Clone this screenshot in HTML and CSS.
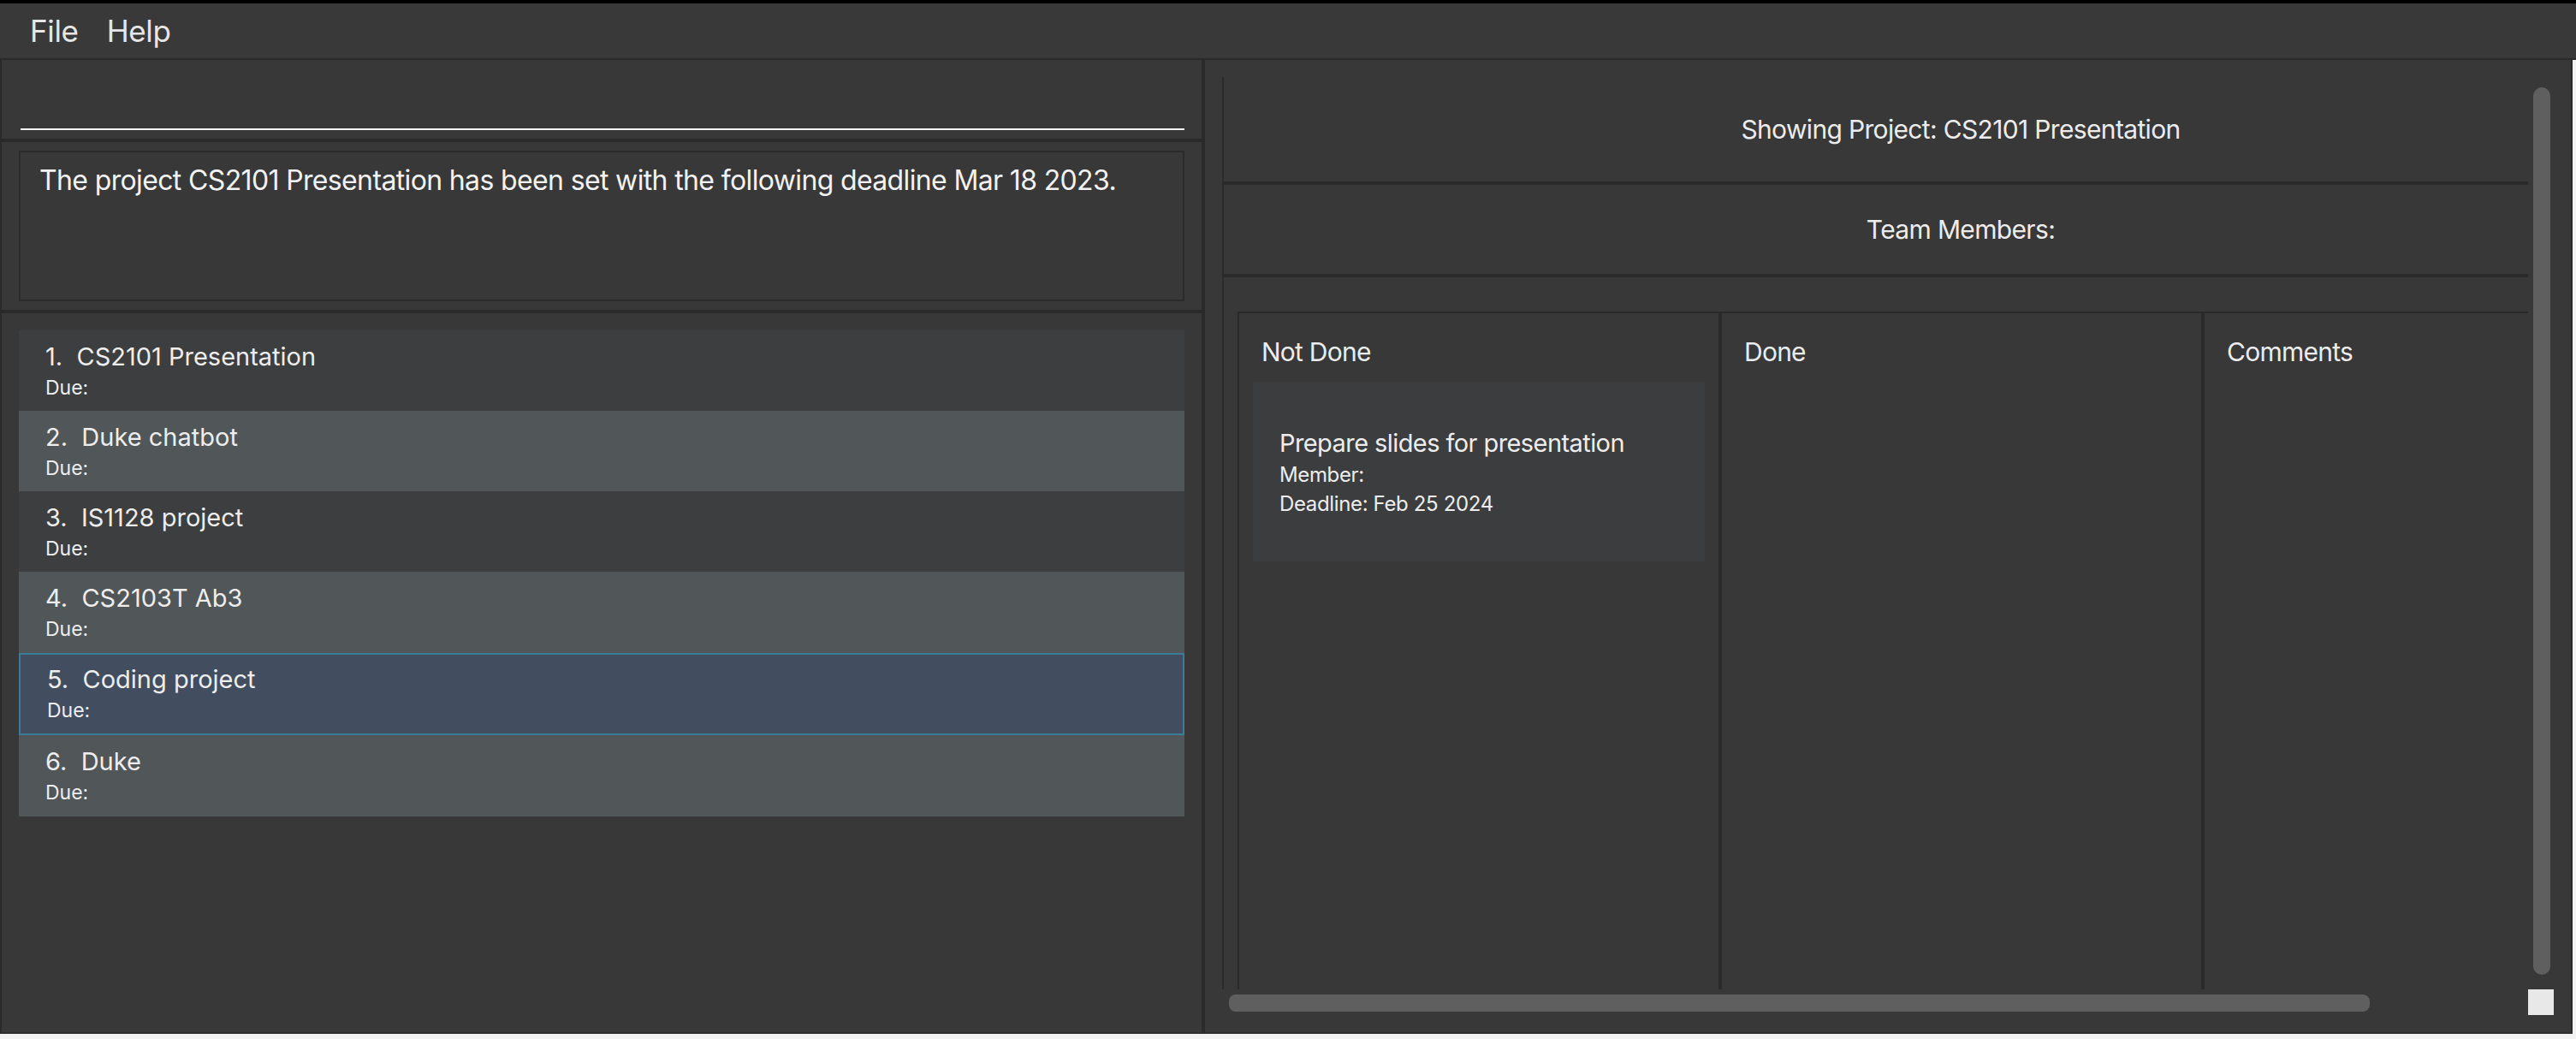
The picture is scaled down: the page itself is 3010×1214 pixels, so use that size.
FILE: index.html
```html
<!DOCTYPE html>
<html>
<head>
<meta charset="utf-8">
<link rel="stylesheet" href="styles.css">
</head>
<body>
<div class="topline"></div>
<div class="menubar">
  <span class="menu-item">File</span>
  <span class="menu-item">Help</span>
</div>
<div class="window">
  <div class="left">
    <div class="cmd"><div class="cmd-line"></div></div>
    <div class="result">
      <div class="result-box">The project CS2101 Presentation has been set with the following deadline Mar 18 2023.</div>
    </div>
    <div class="list">
      <div class="item odd"><div class="title">1.&nbsp; CS2101 Presentation</div><div class="due">Due:</div></div>
      <div class="item even"><div class="title">2.&nbsp; Duke chatbot</div><div class="due">Due:</div></div>
      <div class="item odd"><div class="title">3.&nbsp; IS1128 project</div><div class="due">Due:</div></div>
      <div class="item even tall"><div class="title">4.&nbsp; CS2103T Ab3</div><div class="due">Due:</div></div>
      <div class="item selected"><div class="title">5.&nbsp; Coding project</div><div class="due">Due:</div></div>
      <div class="item even tall"><div class="title">6.&nbsp; Duke</div><div class="due">Due:</div></div>
    </div>
  </div>
  <div class="right">
    <div class="scroll">
      <div class="viewport">
        <div class="content">
          <div class="head head1">Showing Project: CS2101 Presentation</div>
          <div class="head head2">Team Members:</div>
          <div class="columns">
            <div class="col">
              <div class="col-title">Not Done</div>
              <div class="card">
                <div class="card-title">Prepare slides for presentation</div>
                <div class="card-line">Member:</div>
                <div class="card-line">Deadline: Feb 25 2024</div>
              </div>
            </div>
            <div class="col">
              <div class="col-title">Done</div>
            </div>
            <div class="col">
              <div class="col-title">Comments</div>
            </div>
          </div>
        </div>
      </div>
      <div class="vbar"><div class="vthumb"></div></div>
      <div class="hbar"><div class="hthumb"></div></div>
      <div class="corner"></div>
    </div>
  </div>
</div>
</body>
</html>
```

FILE: styles.css
```css
* { box-sizing: border-box; }
html, body {
  margin: 0;
  padding: 0;
  background: #f3f3f3;
  width: 3010px;
  height: 1214px;
  overflow: hidden;
  font-family: "Inter", "Noto Sans", sans-serif;
  color: #ececec;
}
.topline {
  height: 4px;
  background: #000;
  width: 3010px;
}
.menubar {
  height: 66px;
  width: 3010px;
  background: #393939;
  border-bottom: 2px solid #2a2a2a;
  display: flex;
  padding-left: 35px;
  gap: 33px;
}
.menu-item {
  font-size: 35px;
  line-height: 64px;
  color: #e6e6e6;
  letter-spacing: -0.01em;
}
.window {
  width: 3006px;
  height: 1138px;
  display: flex;
  background: #383838;
  border-left: 2px solid #2a2a2a;
  border-right: 2px solid #2a2a2a;
  border-bottom: 2px solid #2e2e2e;
}
.left {
  width: 1406px;
  flex: none;
  display: flex;
  flex-direction: column;
  border-right: 4px solid #2a2a2a;
}
.cmd {
  height: 96px;
  border-bottom: 4px solid #2a2a2a;
  display: flex;
  align-items: flex-end;
  padding: 0 20px 10px 22px;
}
.cmd-line {
  height: 2px;
  width: 100%;
  background: #f5f5f5;
}
.result {
  height: 200px;
  border-bottom: 4px solid #2a2a2a;
  padding: 10px 20px 10px 20px;
}
.result-box {
  height: 176px;
  border: 2px solid #2b2b2b;
  padding: 13px 16px 0 22px;
  font-size: 32px;
  line-height: 40px;
  letter-spacing: -0.02em;
  color: #f2f2f2;
}
.list {
  flex: 1;
  padding: 20px 20px 0 20px;
}
.item {
  height: 94px;
  padding: 13px 0 0 31px;
}
.item.tall { height: 95px; }
.item.odd { background: #3c3e3f; }
.item.even { background: #515658; }
.item.selected {
  height: 96px;
  background: #424d5f;
  border: 2px solid #3a7c98;
  padding-top: 11px;
}
.title {
  font-size: 29px;
  line-height: 36px;
  color: #ededed;
}
.due {
  font-size: 23px;
  line-height: 36px;
  color: #ededed;
}
.right {
  flex: 1;
  padding: 20px 20px 20px 20px;
}
.scroll {
  display: grid;
  grid-template-columns: 1526px 30px;
  grid-template-rows: 1066px 30px;
}
.viewport {
  overflow: hidden;
  border-left: 2px solid #2a2a2a;
}
.content {
  width: 1722px;
}
.head {
  text-align: center;
  font-size: 30px;
  letter-spacing: -0.022em;
  color: #ececec;
  border-bottom: 4px solid #2a2a2a;
}
.head1 { height: 126px; line-height: 122px; }
.head2 { height: 108px; line-height: 104px; }
.columns {
  margin: 40px 0 0 16px;
  height: 800px;
  display: flex;
  border-top: 2px solid #2a2a2a;
  border-left: 2px solid #2a2a2a;
  width: 1692px;
}
.col {
  width: 560px;
  flex: none;
  padding: 25px 16px 0 16px;
}
.col + .col { border-left: 4px solid #2a2a2a; width: 564px; }
.col-title {
  font-size: 30px;
  line-height: 40px;
  padding-left: 10px;
  letter-spacing: -0.025em;
  color: #ececec;
}
.card {
  margin-top: 15px;
  height: 210px;
  background: #3c3d3f;
  padding: 52px 0 0 31px;
}
.card-title {
  font-size: 29px;
  line-height: 40px;
  letter-spacing: -0.02em;
  color: #ededed;
}
.card-line {
  font-size: 24px;
  line-height: 34px;
  letter-spacing: -0.015em;
  color: #ededed;
}
.vbar {
  padding: 12px 4px 17px 6px;
}
.vthumb {
  width: 20px;
  height: 100%;
  background: #5f5f5f;
  border-radius: 10px;
}
.hbar {
  padding: 6px 0 4px 8px;
}
.hthumb {
  width: 1333px;
  height: 20px;
  background: #5f5f5f;
  border-radius: 8px;
}
.corner {
  background: #e8e8e8;
}
```
